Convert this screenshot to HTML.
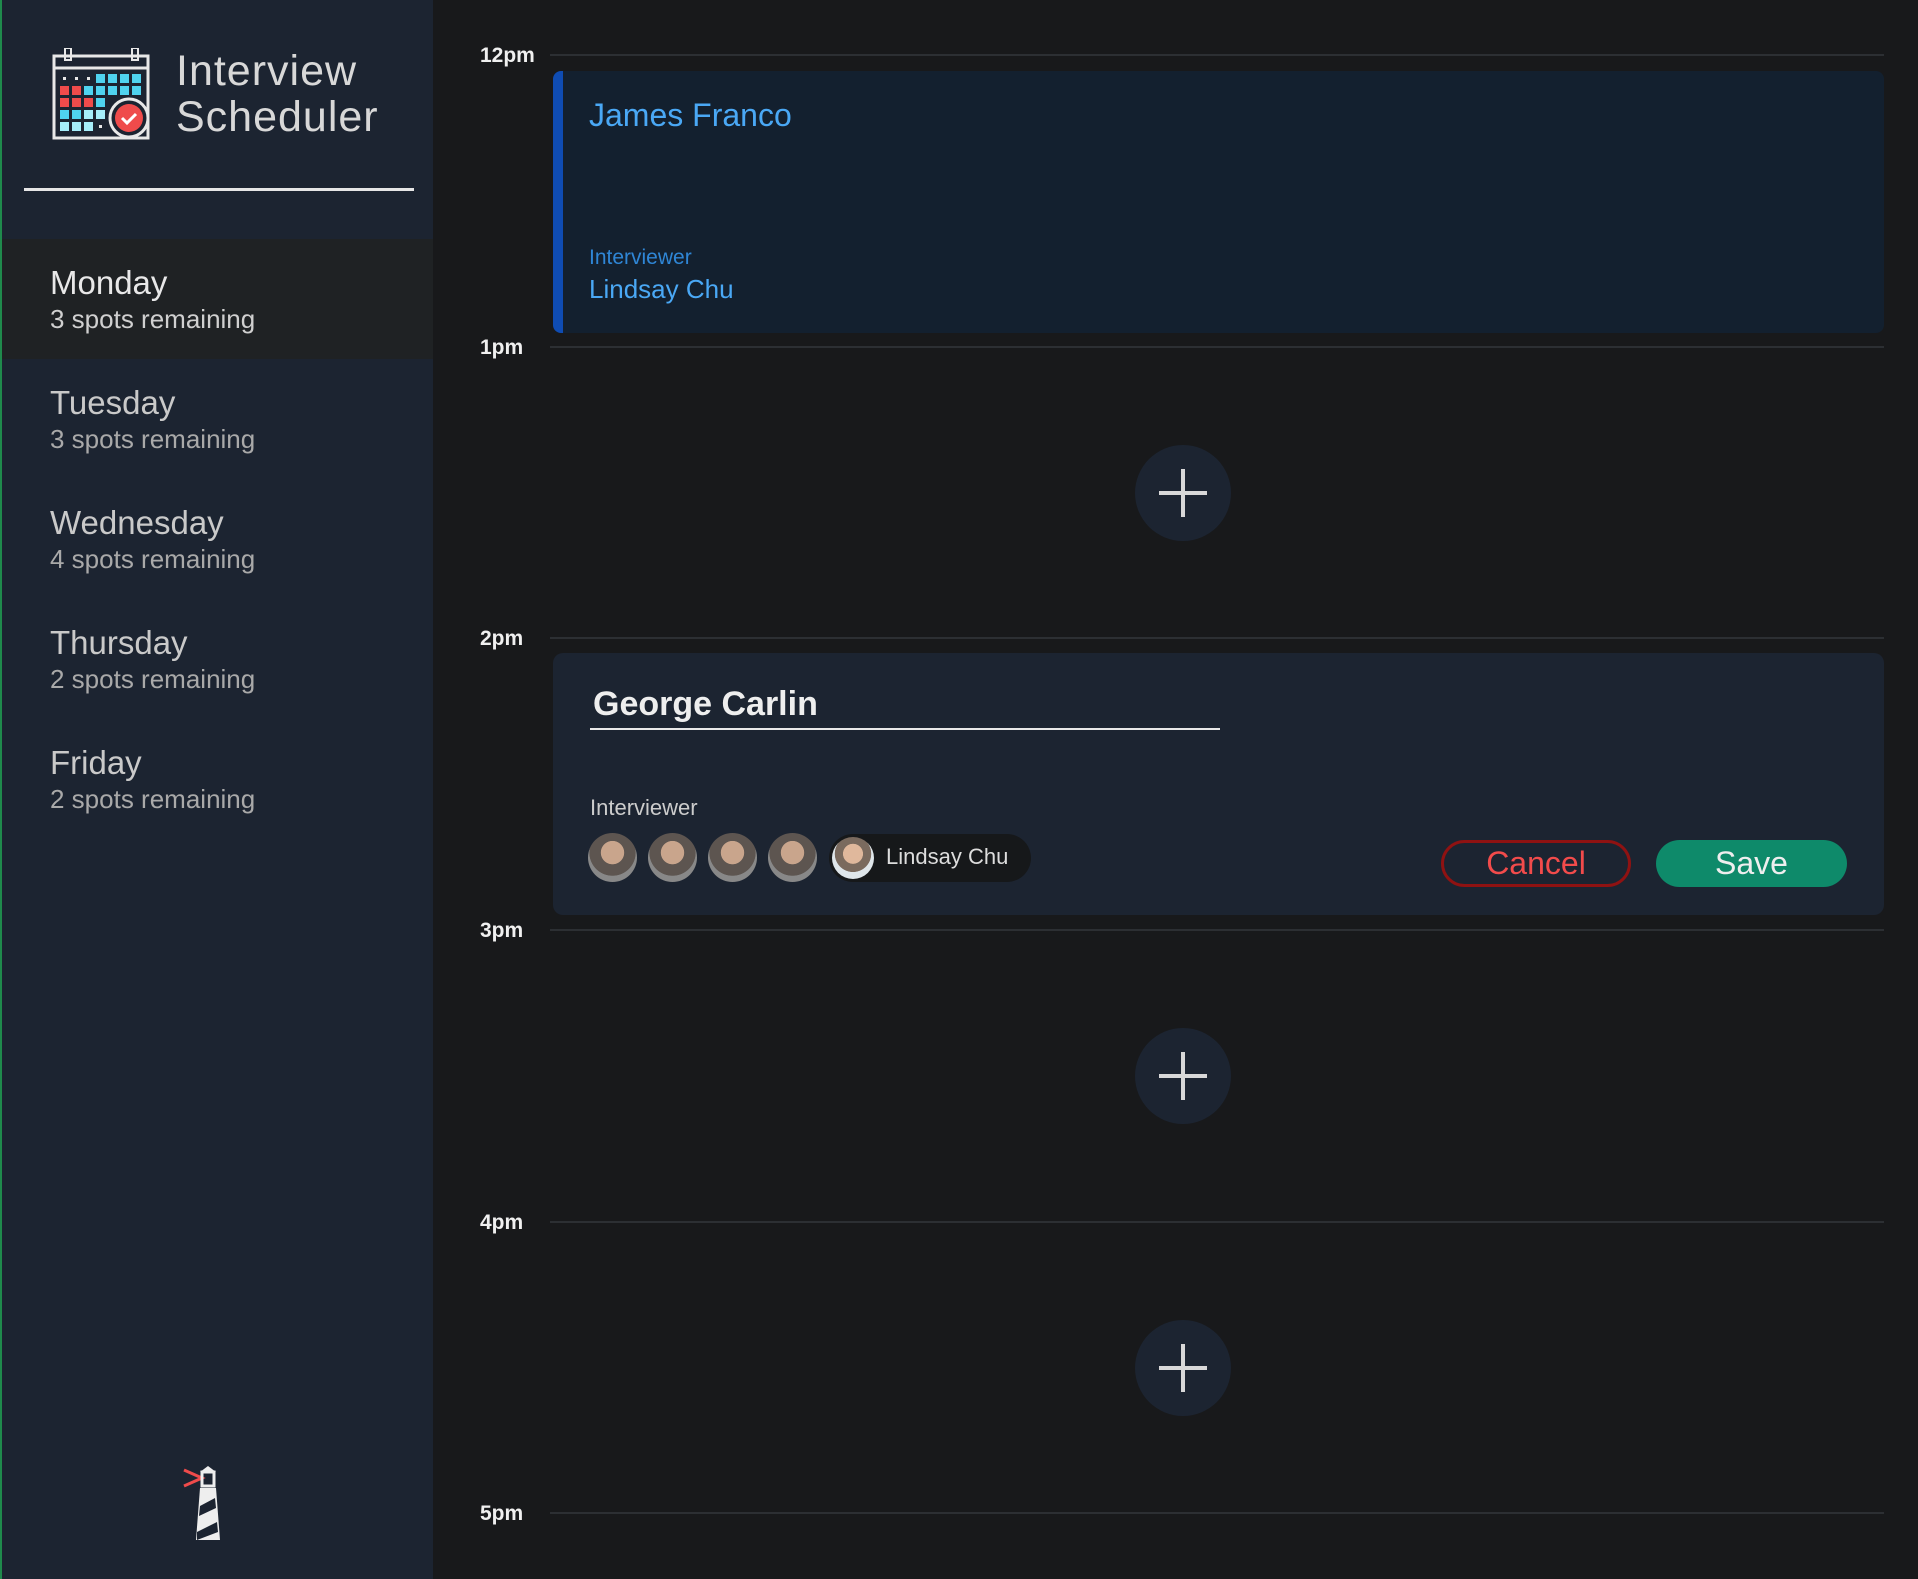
<!DOCTYPE html>
<html><head><meta charset="utf-8"><style>
*{margin:0;padding:0;box-sizing:border-box}
body{width:1918px;height:1579px;background:#18191b;font-family:"Liberation Sans",sans-serif;position:relative;overflow:hidden}
.side{position:absolute;left:0;top:0;width:433px;height:1579px;background:#1c2431;border-left:2px solid #1f8a4c}
.title{position:absolute;left:174px;top:48px;color:#d8d8d8;font-size:43px;line-height:46px;font-weight:300;letter-spacing:1px}
.hr{position:absolute;left:22px;top:188px;width:390px;height:3px;background:#e6e6e6}
.day{position:absolute;left:0;width:431px;height:120px;padding-left:48px;color:#c9c9c9}
.day.sel{background:#1f2224;color:#e8e8e8}
.day b{display:block;font-weight:normal;font-size:33px;padding-top:24px;line-height:40px}
.day span{display:block;font-size:26px;line-height:32px;color:#a9a9a9}
.day.sel span{color:#d0d0d0}
.t{position:absolute;left:480px;color:#f0f0f0;font-weight:bold;font-size:21px}
.ln{position:absolute;left:550px;width:1334px;height:2px;background:#2c2f33}
.plus{position:absolute;left:1135px;width:96px;height:96px;border-radius:50%;background:#1c2431}
.plus:before,.plus:after{content:"";position:absolute;background:#d8d8d8;left:24px;top:46px;width:48px;height:4px}
.plus:after{left:46px;top:24px;width:4px;height:48px}
.av{position:absolute;top:833px;width:49px;height:49px;border-radius:50%;background:radial-gradient(circle at 50% 40%,#c9a58c 0 30%,#5d5550 31% 60%,#888 61%)}
</style></head><body>
<div class="side">
<svg style="position:absolute;left:50px;top:48px" width="100" height="92" viewBox="0 0 100 92">
<rect x="2" y="8" width="94" height="82" fill="none" stroke="#e8e8e8" stroke-width="3"/>
<line x1="2" y1="20" x2="96" y2="20" stroke="#e8e8e8" stroke-width="3"/>
<line x1="22" y1="8" x2="86" y2="8" stroke="#e8e8e8" stroke-width="3"/>
<rect x="13" y="0" width="6" height="12" fill="none" stroke="#e8e8e8" stroke-width="2"/>
<rect x="80" y="0" width="6" height="12" fill="none" stroke="#e8e8e8" stroke-width="2"/>
<g fill="#e8e8e8"><rect x="11" y="29" width="3" height="3"/><rect x="23" y="29" width="3" height="3"/><rect x="35" y="29" width="3" height="3"/><rect x="47" y="77" width="3" height="3"/></g>
<g fill="#4fd3ef"><rect x="44" y="26" width="9" height="9"/><rect x="56" y="26" width="9" height="9"/><rect x="68" y="26" width="9" height="9"/><rect x="80" y="26" width="9" height="9"/>
<rect x="32" y="38" width="9" height="9"/><rect x="44" y="38" width="9" height="9"/><rect x="56" y="38" width="9" height="9"/><rect x="68" y="38" width="9" height="9"/><rect x="80" y="38" width="9" height="9"/>
<rect x="44" y="50" width="9" height="9"/><rect x="8" y="62" width="9" height="9"/><rect x="20" y="62" width="9" height="9"/></g>
<g fill="#a6eefa"><rect x="32" y="62" width="9" height="9"/><rect x="44" y="62" width="9" height="9"/><rect x="8" y="74" width="9" height="9"/><rect x="20" y="74" width="9" height="9"/><rect x="32" y="74" width="9" height="9"/></g>
<g fill="#ef4b4b"><rect x="8" y="38" width="9" height="9"/><rect x="20" y="38" width="9" height="9"/><rect x="8" y="50" width="9" height="9"/><rect x="20" y="50" width="9" height="9"/><rect x="32" y="50" width="9" height="9"/></g>
<circle cx="77" cy="70" r="19" fill="#1c2431" stroke="#e8e8e8" stroke-width="3"/><circle cx="77" cy="70" r="14" fill="#ef4b4b"/>
<path d="M70 70 l5 5 l9 -9" stroke="#fff" stroke-width="3" fill="none"/>
</svg>
<div class="title">Interview<br>Scheduler</div>
<div class="hr"></div>
<div class="day sel" style="top:239px"><b>Monday</b><span>3 spots remaining</span></div>
<div class="day" style="top:359px"><b>Tuesday</b><span>3 spots remaining</span></div>
<div class="day" style="top:479px"><b>Wednesday</b><span>4 spots remaining</span></div>
<div class="day" style="top:599px"><b>Thursday</b><span>2 spots remaining</span></div>
<div class="day" style="top:719px"><b>Friday</b><span>2 spots remaining</span></div>
<svg style="position:absolute;left:180px;top:1466px" width="52" height="76" viewBox="0 0 52 76">
<path d="M2 4 L20 12 L2 20" stroke="#ef4b4b" stroke-width="3" fill="none"/>
<path d="M26 0 L34 6 L18 6 Z" fill="#eee"/><rect x="20" y="6" width="12" height="14" fill="none" stroke="#eee" stroke-width="3"/>
<path d="M18 22 L34 22 L38 74 L14 74 Z" fill="#eee"/>
<path d="M18 40 L33 32 L34 42 L17 50 Z M15 66 L35 56 L36 66 L15 74 Z" fill="#1c2431"/>
</svg>
</div>
<div class="t" style="top:44px">12pm</div><div class="ln" style="top:54px"></div>
<div class="t" style="top:336px">1pm</div><div class="ln" style="top:346px"></div>
<div class="t" style="top:627px">2pm</div><div class="ln" style="top:637px"></div>
<div class="t" style="top:919px">3pm</div><div class="ln" style="top:929px"></div>
<div class="t" style="top:1211px">4pm</div><div class="ln" style="top:1221px"></div>
<div class="t" style="top:1502px">5pm</div><div class="ln" style="top:1512px"></div>
<div style="position:absolute;left:553px;top:71px;width:1331px;height:262px;background:#13202f;border-left:10px solid #0f4cb3;border-radius:8px">
<div style="position:absolute;left:26px;top:26px;color:#4aa8f5;font-size:32px">James Franco</div>
<div style="position:absolute;left:26px;top:175px;color:#2f86d6;font-size:21px">Interviewer</div>
<div style="position:absolute;left:26px;top:203px;color:#4aa8f5;font-size:26px">Lindsay Chu</div>
</div>
<div class="plus" style="top:445px"></div>
<div style="position:absolute;left:553px;top:653px;width:1331px;height:262px;background:#1c2431;border-radius:10px">
<div style="position:absolute;left:40px;top:32px;color:#eee;font-size:34px;font-weight:bold">George Carlin</div>
<div style="position:absolute;left:37px;top:75px;width:630px;height:2px;background:#e8e8e8"></div>
<div style="position:absolute;left:37px;top:142px;color:#ccc;font-size:22px">Interviewer</div>
<div style="position:absolute;left:888px;top:187px;width:190px;height:47px;border:3px solid #8f1212;border-radius:24px;color:#f24b4b;font-size:32px;text-align:center;line-height:40px">Cancel</div>
<div style="position:absolute;left:1103px;top:187px;width:191px;height:47px;background:#0e8a6a;border-radius:24px;color:#eee;font-size:32px;text-align:center;line-height:46px">Save</div>
</div>
<div class="av" style="left:588px"></div><div class="av" style="left:648px"></div><div class="av" style="left:708px"></div><div class="av" style="left:768px"></div>
<div style="position:absolute;left:829px;top:834px;width:202px;height:48px;background:#16181a;border-radius:24px">
<div class="av" style="left:3px;top:3px;width:42px;height:42px;background:radial-gradient(circle at 50% 40%,#e0b89c 0 30%,#7a6a5e 31% 55%,#dfe6ea 56%)"></div>
<div style="position:absolute;left:57px;top:10px;color:#ddd;font-size:22px">Lindsay Chu</div></div>
<div class="plus" style="top:1028px"></div>
<div class="plus" style="top:1320px"></div>
</body></html>
